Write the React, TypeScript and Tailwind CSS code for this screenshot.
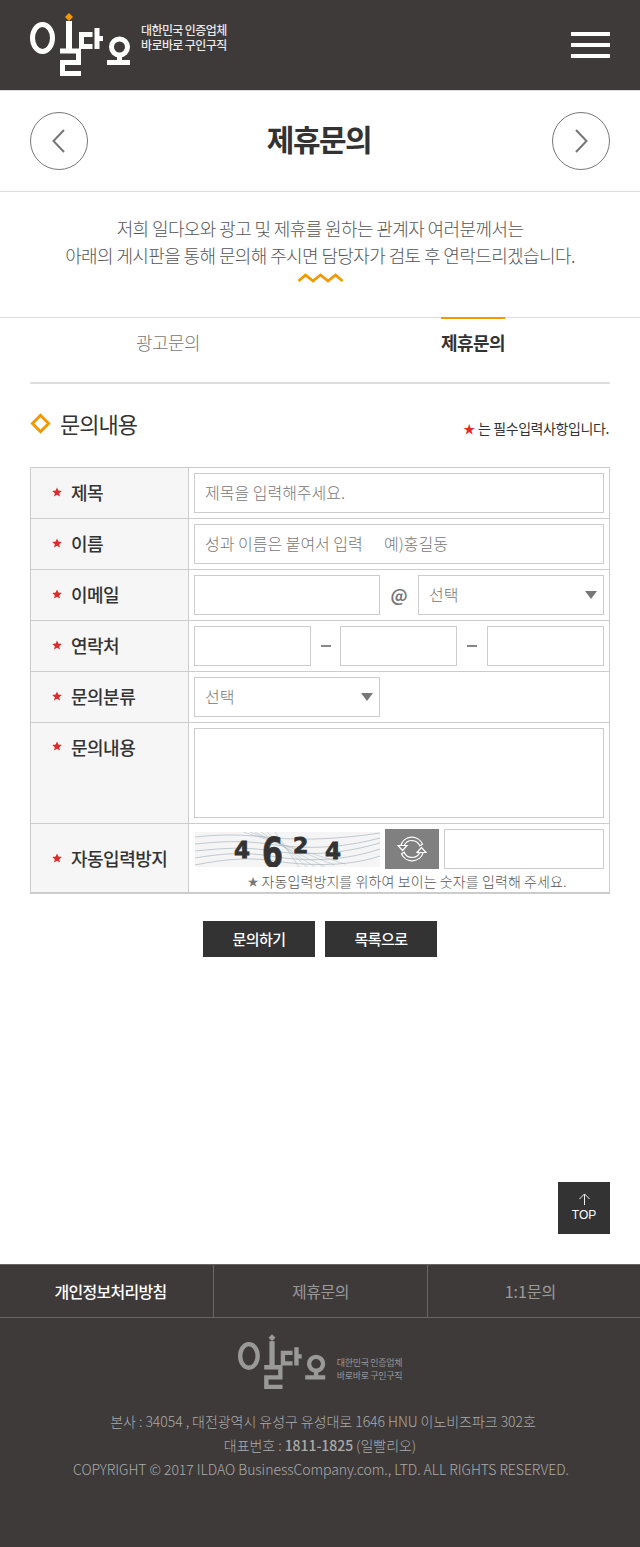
import React from 'react'

const FONT = "font-['Noto_Sans_CJK_KR','Noto_Sans',sans-serif]"

const Logo = ({ color, dot, size }: { color: string; dot: string; size: string }) => (
  <svg viewBox="0 0 102 65" className={size} fill="none">
    <ellipse cx="12.500" cy="25" rx="10" ry="13.500" stroke={color} strokeWidth="5" />
    <path d="M39 8V38" stroke={color} strokeWidth="6" />
    <path d="M30 38H48.500V49.500H32.500V60.500H51" stroke={color} strokeWidth="5" />
    <path d="M62.500 21.500H51.500V33.500H62.500" stroke={color} strokeWidth="5" />
    <path d="M67 15V36M67 25.500H73" stroke={color} strokeWidth="5" />
    <circle cx="89.500" cy="34" r="8" stroke={color} strokeWidth="5" />
    <path d="M89.500 43V48M77 49.500H100" stroke={color} strokeWidth="5" />
    <path d="M39 0L43 4L39 8L35 4Z" fill={dot} />
  </svg>
)

const Star = () => (
  <svg viewBox="0 0 24 24" className="w-[10px] h-[10px] shrink-0" fill="#e12a2a">
    <path d="M12 1l3.2 7.6 8.3.7-6.3 5.4 1.9 8.1L12 18.500 4.900 22.800l1.900-8.100L.5 9.300l8.300-.7z" />
  </svg>
)

const Row = ({ label, h, top, children }: { label: string; h: string; top?: boolean; children: React.ReactNode }) => (
  <div className={`flex border-b border-[#cccccc] ${h}`}>
    <div className={`w-[158px] shrink-0 bg-[#f6f6f6] border-r border-[#cccccc] pl-[21px] flex gap-[9px] ${top ? 'pt-[11px] items-start' : 'items-center pb-[2px]'}`}>
      <span className={top ? 'mt-[7px]' : ''}><Star /></span>
      <span className="text-[18px] leading-[26px] font-medium text-[#333333] tracking-[-0.5px]">{label}</span>
    </div>
    <div className="flex-1 px-[5px] pt-[5px] flex items-start">{children}</div>
  </div>
)

const Box = ({ w, text, h = 'h-[40px]' }: { w: string; text?: string; h?: string }) => (
  <div className={`${w} ${h} shrink-0 border border-[#cccccc] bg-white pl-[10px] pb-[2px] flex items-center text-[16px] font-light text-[#777777] whitespace-pre`}>
    {text}
  </div>
)

const Select = ({ w }: { w: string }) => (
  <div className={`${w} h-[40px] shrink-0 border border-[#cccccc] bg-white pl-[10px] pr-[6px] flex items-center justify-between text-[16px] font-light text-[#777777]`}>
    <span className="pb-[2px]">선택</span>
    <span className="w-0 h-0 border-x-[6px] border-x-transparent border-t-[8px] border-t-[#777777]" />
  </div>
)

const Captcha = () => (
  <svg viewBox="0 0 185 35" className="w-[185px] h-[35px] shrink-0 mt-[3px] ml-[1px]">
    <rect width="185" height="35" fill="#f5f5f5" />
    <g fill="none" stroke="#a9b6c0" strokeWidth="0.7">
      <path d="M0 5C30 2 45 3 60 4S110 12 185 1" />
      <path d="M0 12C30 9 45 9 65 11S125 22 185 6" />
      <path d="M0 19C30 16 50 15 70 18S130 27 185 11" />
      <path d="M0 26C30 21 50 20 75 24S140 32 185 17" />
      <path d="M0 33C30 27 55 25 80 29S150 36 185 24" />
      <path d="M55 0L140 33M60 0L130 35M66 0L120 35M72 0L112 35M80 0L104 35M48 0L150 32" strokeWidth="0.5" />
    </g>
    <g fill="#333333" stroke="#333333" strokeWidth="0.8" fontFamily="'DejaVu Sans',sans-serif" fontWeight="700">
      <text x="39" y="26" fontSize="23">4</text>
      <text x="67" y="35" fontSize="40" textLength="21" lengthAdjust="spacingAndGlyphs">6</text>
      <text x="98" y="21" fontSize="22">2</text>
      <text x="130" y="27" fontSize="23">4</text>
    </g>
  </svg>
)

const RefreshIcon = () => (
  <svg viewBox="0 0 30 26" className="w-[30px] h-[26px]" fill="none" stroke="#ffffff" strokeWidth="1.200">
    <path d="M3.800 9.500A11.500 11.500 0 0 1 25.500 8.300L22.800 9.800A8.500 8.500 0 0 0 7.200 9.500" />
    <path d="M26.200 16.500A11.500 11.500 0 0 1 4.500 17.700L7.200 16.200A8.500 8.500 0 0 0 22.800 16.500" />
    <path d="M1 9.500H10L5.500 14.500ZM20 16.500H29L24.500 11.500Z" />
  </svg>
)

export default function App() {
  return (
    <div className={`w-[640px] min-h-[1547px] bg-white flex flex-col ${FONT}`}>
      <header className="h-[91px] bg-[#3e3a39] border-b border-[#dddddd] flex items-center justify-between pl-[30px] pr-[30px]">
        <div className="flex items-start">
          <Logo color="#ffffff" dot="#f39800" size="w-[102px] h-[65px]" />
          <div className="ml-[9px] mt-[9px] text-[12px] leading-[15px] font-medium text-[#e8e8e8] tracking-[-0.6px]">
            <p>대한민국 인증업체</p>
            <p>바로바로 구인구직</p>
          </div>
        </div>
        <div className="flex flex-col gap-[7px]">
          <div className="w-[39px] h-[4px] bg-white" />
          <div className="w-[39px] h-[4px] bg-white" />
          <div className="w-[39px] h-[4px] bg-white" />
        </div>
      </header>

      <div className="h-[101px] border-b border-[#dddddd] flex items-center justify-between px-[30px]">
        <div className="w-[58px] h-[58px] rounded-full border border-[#777777] flex items-center justify-center">
          <svg viewBox="0 0 14 24" className="w-[14px] h-[24px]" fill="none" stroke="#777777" strokeWidth="2">
            <path d="M12 1L1.500 12L12 23" />
          </svg>
        </div>
        <h1 className="text-[30px] font-bold text-[#333333] tracking-[-1.5px] pb-[5px] pr-[2px]">제휴문의</h1>
        <div className="w-[58px] h-[58px] rounded-full border border-[#777777] flex items-center justify-center">
          <svg viewBox="0 0 14 24" className="w-[14px] h-[24px]" fill="none" stroke="#777777" strokeWidth="2">
            <path d="M2 1L12.500 12L2 23" />
          </svg>
        </div>
      </div>

      <div className="h-[126px] border-b border-[#dddddd] pt-[23px] flex flex-col items-center text-[18px] leading-[27px] font-light text-[#555555] tracking-[-0.6px]">
        <p>저희 일다오와 광고 및 제휴를 원하는 관계자 여러분께서는</p>
        <p>아래의 게시판을 통해 문의해 주시면 담당자가 검토 후 연락드리겠습니다.</p>
        <svg viewBox="0 0 46 10" className="w-[47px] h-[10px] mt-[4px]" fill="none" stroke="#f39800" strokeWidth="2.800">
          <path d="M1 8L8 2L15.500 8L23 2L30.500 8L38 2L45 8" />
        </svg>
      </div>

      <div className="px-[30px]">
        <div className="flex h-[66px] border-b-2 border-[#dddddd]">
          <div className="w-[276px] flex justify-center">
            <span className="pt-[10px] text-[18px] leading-[28px] font-light text-[#777777] tracking-[-0.6px]">광고문의</span>
          </div>
          <div className="flex-1 pl-[30px] flex justify-center">
            <span className="relative -top-[1px] h-fit border-t-2 border-[#f39800] pt-[9px] text-[18px] leading-[28px] font-bold text-[#333333] tracking-[-0.6px]">제휴문의</span>
          </div>
        </div>

        <div className="flex justify-between items-center h-[83px] pb-[4px]">
          <div className="flex items-center gap-[9px]">
            <svg viewBox="0 0 22 22" className="w-[21px] h-[21px]" fill="none" stroke="#f39800" strokeWidth="3">
              <path d="M11 2.500L19.500 11L11 19.500L2.500 11Z" />
            </svg>
            <h2 className="text-[22px] font-normal text-[#333333] tracking-[-1px]">문의내용</h2>
          </div>
          <p className="flex items-center gap-[3px] mt-[10px] pr-[1px] text-[14px] text-[#333333] tracking-[-0.4px]">
            <span className="text-[#e12a2a] text-[12px] leading-none">★</span>는 필수입력사항입니다.
          </p>
        </div>

        <div className="border border-[#cccccc] border-b-2">
          <Row label="제목" h="h-[51px]"><Box w="w-[410px]" text="제목을 입력해주세요." /></Row>
          <Row label="이름" h="h-[51px]"><Box w="w-[410px]" text="성과 이름은 붙여서 입력      예)홍길동" /></Row>
          <Row label="이메일" h="h-[51px]">
            <Box w="w-[186px]" />
            <span className="w-[38px] h-[40px] flex items-center justify-center text-[17px] font-bold text-[#777777]">@</span>
            <Select w="w-[186px]" />
          </Row>
          <Row label="연락처" h="h-[51px]">
            <Box w="w-[117px]" />
            <span className="w-[29px] h-[40px] flex items-center justify-center"><span className="w-[10px] h-[2px] bg-[#888888]" /></span>
            <Box w="w-[117px]" />
            <span className="w-[30px] h-[40px] flex items-center justify-center"><span className="w-[10px] h-[2px] bg-[#888888]" /></span>
            <Box w="w-[117px]" />
          </Row>
          <Row label="문의분류" h="h-[51px]"><Select w="w-[186px]" /></Row>
          <Row label="문의내용" h="h-[101px]" top><Box w="w-[410px]" h="h-[90px]" /></Row>
          <div className="flex h-[68px]">
            <div className="w-[158px] shrink-0 bg-[#f6f6f6] border-r border-[#cccccc] pl-[21px] flex items-center gap-[9px]">
              <Star />
              <span className="text-[18px] leading-[26px] font-medium text-[#333333] tracking-[-0.5px]">자동입력방지</span>
            </div>
            <div className="flex-1 px-[5px] pt-[5px]">
              <div className="flex items-start">
                <Captcha />
                <div className="ml-[5px] w-[54px] h-[40px] bg-[#808080] flex items-center justify-center"><RefreshIcon /></div>
                <Box w="w-[160px] ml-[5px]" />
              </div>
              <p className="flex items-center justify-center gap-[3px] leading-[20px] mt-[2px] pl-[16px] text-[14px] font-light text-[#555555] tracking-[0.1px]">
                <span className="text-[11px] text-[#777777]">★</span>
                <span>자동입력방지를 위하여 보이는 숫자를 입력해 주세요.</span>
              </p>
            </div>
          </div>
        </div>

        <div className="flex justify-center gap-[10px] mt-[27px]">
          <div className="w-[112px] h-[36px] bg-[#333333] flex items-center justify-center text-[15px] font-medium text-white tracking-[-0.5px]">문의하기</div>
          <div className="w-[112px] h-[36px] bg-[#333333] flex items-center justify-center text-[15px] font-medium text-white tracking-[-0.5px]">목록으로</div>
        </div>

        <div className="flex justify-end mt-[225px]">
          <div className="w-[52px] h-[52px] bg-[#333333] flex flex-col items-center justify-center text-white">
            <svg viewBox="0 0 14 14" className="w-[13px] h-[13px]" fill="none" stroke="#ffffff" strokeWidth="1">
              <path d="M7 13V1.500M1.500 6.500L7 1L12.500 6.500" />
            </svg>
            <span className="font-['Liberation_Sans',sans-serif] text-[12px] leading-[15px] mt-[2px]">TOP</span>
          </div>
        </div>
      </div>

      <footer className="mt-[30px] flex-1 bg-[#3e3a39]">
        <div className="h-[54px] border-y border-[#6a6665] flex text-[16px]">
          <div className="w-[214px] border-r border-[#6a6665] pl-[8px] flex items-center justify-center font-medium text-white tracking-[-0.7px]">개인정보처리방침</div>
          <div className="w-[214px] border-r border-[#6a6665] flex items-center justify-center text-[#999999] tracking-[-0.5px]">제휴문의</div>
          <div className="flex-1 pr-[7px] flex items-center justify-center text-[#999999]">1:1문의</div>
        </div>
        <div className="flex justify-center items-start pt-[16px]">
          <Logo color="#999999" dot="#999999" size="w-[89px] h-[57px]" />
          <div className="ml-[10px] mt-[22px] text-[9px] leading-[13px] text-[#999999] tracking-[-0.3px]">
            <p>대한민국 인증업체</p>
            <p>바로바로 구인구직</p>
          </div>
        </div>
        <div className="mt-[18px] flex flex-col items-center text-[14px] leading-[24px] font-light text-[#aaaaaa] tracking-[-0.05px]">
          <p className="pl-[6px]">본사 : 34054 , 대전광역시 유성구 유성대로 1646 HNU 이노비즈파크 302호</p>
          <p>대표번호 : <span className="font-medium">1811-1825</span> (일빨리오)</p>
          <p className="pl-[2px]">COPYRIGHT © 2017 ILDAO BusinessCompany.com., LTD. ALL RIGHTS RESERVED.</p>
        </div>
      </footer>
    </div>
  )
}
